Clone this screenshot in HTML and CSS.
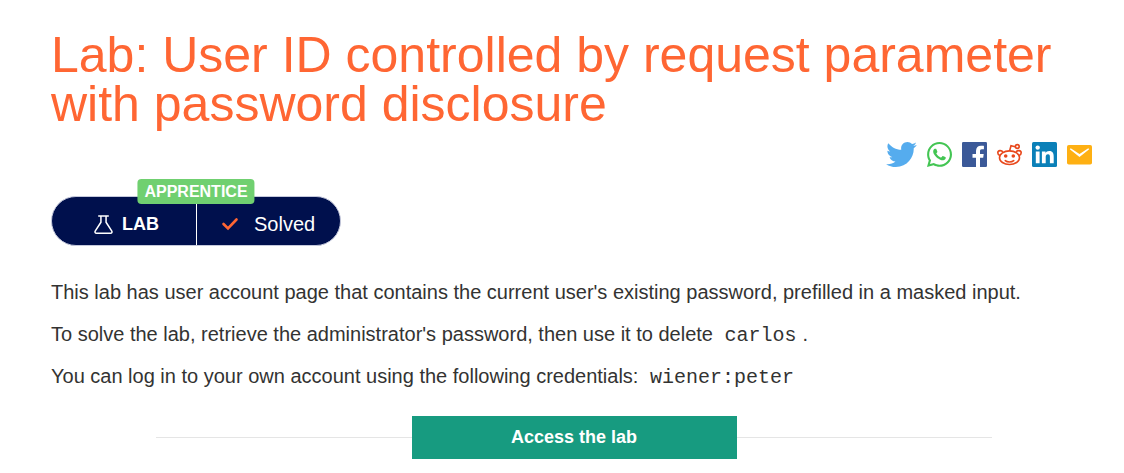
FILE: index.html
```html
<!DOCTYPE html>
<html lang="en">
<head>
<meta charset="utf-8">
<meta name="viewport" content="width=device-width, initial-scale=1">
<title>Lab: User ID controlled by request parameter with password disclosure</title>
<link rel="stylesheet" href="styles.css">
</head>
<body>
<main class="page">
  <h1 class="title">Lab: User ID controlled by request parameter with password disclosure</h1>

  <nav class="share" aria-label="Share">
    <a class="share-link" href="#twitter" aria-label="Twitter"><svg width="31" height="25" viewBox="0 48 512 416"><path fill="#55acee" d="M459.37 151.716c.325 4.548.325 9.097.325 13.645 0 138.72-105.583 298.558-298.558 298.558-59.452 0-114.68-17.219-161.137-47.106 8.447.974 16.568 1.299 25.34 1.299 49.055 0 94.213-16.568 130.274-44.832-46.132-.975-84.792-31.188-98.112-72.772 6.498.974 12.995 1.624 19.818 1.624 9.421 0 18.843-1.3 27.614-3.573-48.081-9.747-84.143-51.98-84.143-102.985v-1.299c13.969 7.797 30.214 12.67 47.431 13.319-28.264-18.843-46.781-51.005-46.781-87.391 0-19.492 5.197-37.36 14.294-52.954 51.655 63.675 129.3 105.258 216.365 109.807-1.624-7.797-2.599-15.918-2.599-24.04 0-57.828 46.782-104.934 104.934-104.934 30.213 0 57.502 12.67 76.67 33.137 23.715-4.548 46.456-13.32 66.599-25.34-7.798 24.366-24.366 44.833-46.132 57.827 21.117-2.273 41.584-8.122 60.426-16.243-14.292 20.791-32.161 39.308-52.628 54.253z"/></svg></a>
    <a class="share-link" href="#whatsapp" aria-label="WhatsApp"><svg width="25" height="25" viewBox="0 32 448 448"><path fill="#43c553" d="M380.9 97.1C339 55.1 283.2 32 223.9 32c-122.4 0-222 99.6-222 222 0 39.1 10.2 77.3 29.6 111L0 480l117.7-30.9c32.4 17.7 68.9 27 106.1 27h.1c122.3 0 224.1-99.6 224.1-222 0-59.3-25.2-115-67.1-157zm-157 341.6c-33.2 0-65.7-8.9-94-25.7l-6.7-4-69.8 18.3L72 359.2l-4.4-7c-18.5-29.4-28.2-63.3-28.2-98.2 0-101.7 82.8-184.5 184.6-184.5 49.3 0 95.6 19.2 130.4 54.1 34.8 34.9 56.2 81.2 56.1 130.5 0 101.8-84.9 184.6-186.6 184.6zm101.2-138.2c-5.5-2.8-32.8-16.2-37.9-18-5.1-1.9-8.8-2.8-12.5 2.8-3.7 5.6-14.3 18-17.6 21.8-3.2 3.7-6.5 4.2-12 1.4-32.6-16.3-54-29.1-75.5-66-5.7-9.8 5.7-9.1 16.3-30.3 1.8-3.7.9-6.9-.5-9.7-1.4-2.8-12.5-30.1-17.1-41.2-4.5-10.8-9.1-9.3-12.5-9.5-3.2-.2-6.9-.2-10.6-.2-3.7 0-9.7 1.4-14.8 6.9-5.1 5.6-19.4 19-19.4 46.3 0 27.3 19.9 53.7 22.6 57.4 2.8 3.7 39.1 59.7 94.8 83.8 35.2 15.2 49 16.5 66.6 13.9 10.7-1.6 32.8-13.4 37.4-26.4 4.6-13 4.6-24.1 3.2-26.4-1.3-2.5-5-3.9-10.5-6.6z"/></svg></a>
    <a class="share-link" href="#facebook" aria-label="Facebook"><svg width="25" height="25" viewBox="0 0 25 25"><rect width="25" height="25" rx="1.2" fill="#3b5998"/><path fill="#fff" d="M14 25v-9.300H10.500V12H14V9c0-3.400 2-5.200 5-5.200 1.400 0 2.500.1 2.900.15v3.400h-2c-1.600 0-1.900.8-1.900 1.900V12h3.700l-.5 3.700H18V25z"/></svg></a>
    <a class="share-link" href="#reddit" aria-label="Reddit"><svg width="25" height="25" viewBox="0 0 25 25" fill="none" stroke="#e8481c" stroke-width="1.600"><ellipse cx="12.500" cy="15.700" rx="10" ry="6.800"/><path d="M2.900 13.600C.1 12.600.1 8.900 2.900 8.600c1.300-.1 2.400.4 3.100 1.300M22.100 13.600c2.800-1 2.800-4.700 0-5-1.300-.1-2.400.4-3.100 1.300M12.600 9l1.400-5.300 4.300 1"/><circle cx="20.300" cy="4.500" r="1.900"/><path d="M8.300 18.600c2 1.800 6.400 1.800 8.400 0" stroke-linecap="round"/><g fill="#e8481c" stroke="none"><circle cx="8.700" cy="14" r="1.800"/><circle cx="16.300" cy="14" r="1.800"/></g></svg></a>
    <a class="share-link" href="#linkedin" aria-label="LinkedIn"><svg width="25" height="25" viewBox="0 0 25 25"><rect width="25" height="25" rx="1.500" fill="#0b80b8"/><g fill="#fff"><circle cx="5.700" cy="5.600" r="2.200"/><path d="M3.800 9.400h3.800v11.900H3.800zM9.900 9.400h3.600V11c.6-1.100 1.900-2 3.700-2 3.800 0 4.500 2.500 4.500 5.700v6.600h-3.800v-5.900c0-1.400 0-3.200-1.900-3.200-2 0-2.300 1.500-2.300 3.100v6H9.900z"/></g></svg></a>
    <a class="share-link" href="#email" aria-label="Email"><svg width="25" height="25" viewBox="0 0 25 25"><rect y="3" width="25" height="19.500" rx="1.800" fill="#feb013"/><path d="M2.800 7.300l9.700 7.700 9.700-7.700-.9-1-8.800 5.600-8.800-5.600z" fill="#fff"/></svg></a>
  </nav>

  <div class="status">
    <span class="level">APPRENTICE</span>
    <div class="status-part status-lab">
      <svg width="19" height="21" viewBox="0 0 20 22" fill="none" stroke="#fff" stroke-width="1.600" stroke-linecap="round" stroke-linejoin="round"><path d="M5 2h10M7.300 2v6.600L1.400 17.700c-.8 1.300-.1 2.500 1.300 2.500h14.600c1.400 0 2.100-1.200 1.300-2.500L12.700 8.600V2"/></svg>
      <strong>LAB</strong>
    </div>
    <div class="status-part status-solved">
      <svg width="18" height="14" viewBox="0 0 18 14" fill="none" stroke="#ff6633" stroke-width="2.600" stroke-linecap="round"><path d="M2.500 7l4.500 4.500L15.500 2.500"/></svg>
      <span>Solved</span>
    </div>
  </div>

  <div class="description">
    <p>This lab has user account page that contains the current user's existing password, prefilled in a masked input.</p>
    <p>To solve the lab, retrieve the administrator's password, then use it to delete <code>carlos</code>.</p>
    <p>You can log in to your own account using the following credentials: <code>wiener:peter</code></p>
  </div>

  <div class="launch">
    <a class="launch-button" href="#launch">Access the lab</a>
  </div>
</main>
</body>
</html>
```

FILE: styles.css
```css
* {
  box-sizing: border-box;
}

body {
  margin: 0;
  background: #fff;
  color: #333332;
  font-family: "Liberation Sans", Arial, sans-serif;
  font-size: 20px;
}

.page {
  padding: 31px 27px 14px 51px;
}

.title {
  margin: 0;
  color: #ff6633;
  font-size: 50px;
  font-weight: 400;
  line-height: 49px;
}

.share {
  display: flex;
  justify-content: flex-end;
  gap: 10px;
  margin-top: 13px;
  padding-right: 5px;
}

.share-link,
.share-link svg {
  display: block;
}

.status {
  position: relative;
  display: inline-flex;
  height: 50px;
  margin-top: 29px;
  border: 1px solid #c5c9dc;
  border-radius: 25px;
  background: #00104d;
  color: #fff;
}

.level {
  position: absolute;
  top: -18px;
  left: 50%;
  transform: translateX(-50%);
  padding: 1px 7px 0;
  border-radius: 4px;
  background: #70d070;
  font-size: 16px;
  font-weight: 700;
  line-height: 24px;
}

.status-part {
  display: flex;
  align-items: center;
  padding-top: 6px;
}

.status-lab {
  gap: 9px;
  width: 145px;
  padding-left: 42px;
  border-right: 1px solid #fff;
  font-size: 18px;
}

.status-solved {
  gap: 15px;
  width: 143px;
  padding-left: 24px;
}

.description {
  margin-top: 31px;
}

.description p {
  margin: 0 0 12px;
  line-height: 30px;
}

.description code {
  padding: 0 6px;
  font-family: "Liberation Mono", "Courier New", monospace;
  font-size: 20px;
  line-height: 20px;
}

.launch {
  display: flex;
  align-items: center;
  width: 80%;
  margin: 25px auto 0;
}

.launch::before,
.launch::after {
  content: "";
  flex: 1;
  height: 1px;
  background: #e5e5e5;
}

.launch-button {
  flex: 0 1 325px;
  background: #179b80;
  color: #fff;
  font-size: 18px;
  font-weight: 700;
  line-height: 43px;
  text-align: center;
  text-decoration: none;
}
```
